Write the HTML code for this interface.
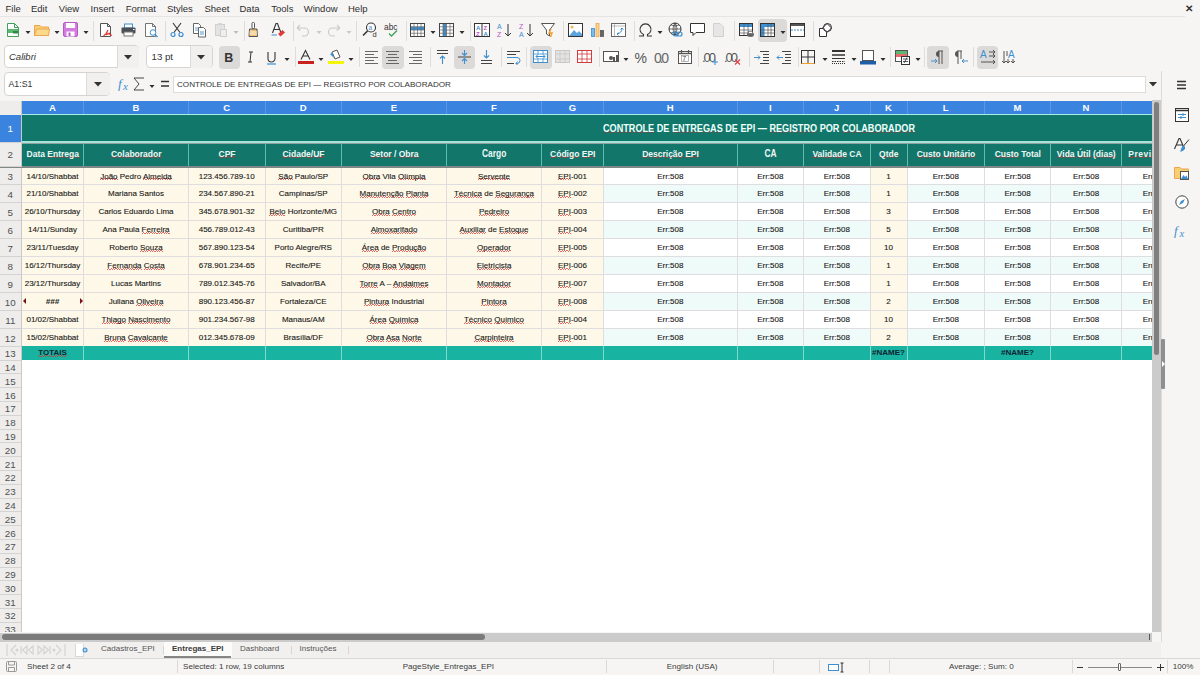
<!DOCTYPE html>
<html><head><meta charset="utf-8"><style>
*{margin:0;padding:0;box-sizing:border-box;}
html,body{width:1200px;height:675px;overflow:hidden;background:#f6f5f4;font-family:"Liberation Sans", sans-serif;}
.ch{position:absolute;top:101px;height:13.5px;line-height:13.5px;text-align:center;color:#fff;font-size:9.5px;font-weight:bold;}
.c{position:absolute;border-right:1px solid #dfdde0;border-bottom:1px solid #dfdde0;text-align:center;font-size:8px;color:#161616;-webkit-text-stroke:0.1px #161616;line-height:18px;white-space:nowrap;overflow:hidden;}
.h{position:absolute;background:#12766a;border-right:1.5px solid #5fbdb0;text-align:center;font-size:8.5px;font-weight:bold;color:#eef8f6;line-height:23px;white-space:nowrap;overflow:hidden;}
.h.big{font-size:10.5px;} .h.big span{display:inline-block;transform:scaleX(0.8);line-height:21px;vertical-align:top;}
.title{position:absolute;text-align:center;font-size:11px;font-weight:bold;color:#ecfffb;line-height:26.5px;white-space:nowrap;}
.t{position:absolute;background:#19b3a1;border-right:1px solid #7fd9cd;text-align:center;font-size:8px;font-weight:bold;color:#123;line-height:13px;white-space:nowrap;overflow:hidden;}
.rh{position:absolute;left:0;width:21.5px;text-align:center;font-size:9.8px;color:#505050;border-bottom:1px solid #d4d3d1;background:#eeedec;border-right:1px solid #c9c8c6;display:flex;align-items:center;justify-content:center;padding-top:1px;}
.rh.sel{background:#3a84e0;color:#fff;}
u{text-decoration:none;background-image:repeating-linear-gradient(90deg,rgba(215,40,40,.85) 0 1.2px,transparent 1.2px 2.4px),repeating-linear-gradient(90deg,transparent 0 1.2px,rgba(215,40,40,.85) 1.2px 2.4px);background-size:100% 0.8px,100% 0.8px;background-position:0 calc(100% - 0.6px),0 calc(100% - 1.4px);background-repeat:no-repeat;}
u.tq{background-image:repeating-linear-gradient(90deg,rgba(170,50,50,.6) 0 1.5px,transparent 1.5px 3px),repeating-linear-gradient(90deg,transparent 0 1.5px,rgba(170,50,50,.6) 1.5px 3px);background-size:100% 1px,100% 1px;background-position:0 calc(100% - 1px),0 calc(100% - 2px);}
.menu{position:absolute;top:3px;font-size:9.5px;color:#2e2e2e;}
.sb{position:absolute;top:662px;font-size:8.1px;color:#3a3a3a;white-space:nowrap;}
.tab{position:absolute;top:644px;font-size:8px;color:#555;white-space:nowrap;}
</style></head>
<body>
<div id="grid" style="position:absolute;left:0;top:0;width:1151.5px;height:632px;overflow:hidden;">
<div style="position:absolute;left:0px;top:101px;width:1152px;height:531px;background:#fff;"></div>
<div style="position:absolute;left:21.5px;top:101px;width:1130.0px;height:13.5px;background:#3a84e0;"></div>
<div class="ch" style="left:21.5px;width:62.0px;">A</div>
<div style="position:absolute;left:83.0px;top:101px;width:1px;height:13.5px;background:#5b97e3;"></div>
<div class="ch" style="left:83.5px;width:105.0px;">B</div>
<div style="position:absolute;left:188.0px;top:101px;width:1px;height:13.5px;background:#5b97e3;"></div>
<div class="ch" style="left:188.5px;width:76.5px;">C</div>
<div style="position:absolute;left:264.5px;top:101px;width:1px;height:13.5px;background:#5b97e3;"></div>
<div class="ch" style="left:265px;width:76.5px;">D</div>
<div style="position:absolute;left:341.0px;top:101px;width:1px;height:13.5px;background:#5b97e3;"></div>
<div class="ch" style="left:341.5px;width:105.0px;">E</div>
<div style="position:absolute;left:446.0px;top:101px;width:1px;height:13.5px;background:#5b97e3;"></div>
<div class="ch" style="left:446.5px;width:95.0px;">F</div>
<div style="position:absolute;left:541.0px;top:101px;width:1px;height:13.5px;background:#5b97e3;"></div>
<div class="ch" style="left:541.5px;width:62.0px;">G</div>
<div style="position:absolute;left:603.0px;top:101px;width:1px;height:13.5px;background:#5b97e3;"></div>
<div class="ch" style="left:603.5px;width:133.5px;">H</div>
<div style="position:absolute;left:736.5px;top:101px;width:1px;height:13.5px;background:#5b97e3;"></div>
<div class="ch" style="left:737px;width:66.5px;">I</div>
<div style="position:absolute;left:803.0px;top:101px;width:1px;height:13.5px;background:#5b97e3;"></div>
<div class="ch" style="left:803.5px;width:66.5px;">J</div>
<div style="position:absolute;left:869.5px;top:101px;width:1px;height:13.5px;background:#5b97e3;"></div>
<div class="ch" style="left:870px;width:37px;">K</div>
<div style="position:absolute;left:906.5px;top:101px;width:1px;height:13.5px;background:#5b97e3;"></div>
<div class="ch" style="left:907px;width:77.5px;">L</div>
<div style="position:absolute;left:984.0px;top:101px;width:1px;height:13.5px;background:#5b97e3;"></div>
<div class="ch" style="left:984.5px;width:66.0px;">M</div>
<div style="position:absolute;left:1050.0px;top:101px;width:1px;height:13.5px;background:#5b97e3;"></div>
<div class="ch" style="left:1050.5px;width:71.0px;">N</div>
<div style="position:absolute;left:1121.0px;top:101px;width:1px;height:13.5px;background:#5b97e3;"></div>
<div class="ch" style="left:1121.5px;width:68.5px;">O</div>
<div style="position:absolute;left:1189.5px;top:101px;width:1px;height:13.5px;background:#5b97e3;"></div>
<div style="position:absolute;left:0px;top:101px;width:21.5px;height:531px;background:#eeedec;"></div>
<div style="position:absolute;left:21px;top:101px;width:1px;height:531px;background:#c9c8c6;"></div>
<div class="c" style="left:22.0px;top:167.5px;width:62.0px;height:17.94999999999999px;background:#fdf8e7;">14/10/Shabbat</div>
<div class="c" style="left:84.0px;top:167.5px;width:105.0px;height:17.94999999999999px;background:#fdf8e7;"><u>João</u> Pedro <u>Almeida</u></div>
<div class="c" style="left:189.0px;top:167.5px;width:76.5px;height:17.94999999999999px;background:#fdf8e7;">123.456.789-10</div>
<div class="c" style="left:265.5px;top:167.5px;width:76.5px;height:17.94999999999999px;background:#fdf8e7;"><u>São</u> Paulo/SP</div>
<div class="c" style="left:342.0px;top:167.5px;width:105.0px;height:17.94999999999999px;background:#fdf8e7;"><u>Obra</u> Vila <u>Olímpia</u></div>
<div class="c" style="left:447.0px;top:167.5px;width:95.0px;height:17.94999999999999px;background:#fdf8e7;"><u>Servente</u></div>
<div class="c" style="left:542.0px;top:167.5px;width:62.0px;height:17.94999999999999px;background:#fdf8e7;"><u>EPI</u>-001</div>
<div class="c" style="left:604.0px;top:167.5px;width:133.5px;height:17.94999999999999px;background:#ffffff;">Err:508</div>
<div class="c" style="left:737.5px;top:167.5px;width:66.5px;height:17.94999999999999px;background:#ffffff;">Err:508</div>
<div class="c" style="left:804.0px;top:167.5px;width:66.5px;height:17.94999999999999px;background:#ffffff;">Err:508</div>
<div class="c" style="left:870.5px;top:167.5px;width:37px;height:17.94999999999999px;background:#fdf8e7;">1</div>
<div class="c" style="left:907.5px;top:167.5px;width:77.5px;height:17.94999999999999px;background:#ffffff;">Err:508</div>
<div class="c" style="left:985.0px;top:167.5px;width:66.0px;height:17.94999999999999px;background:#ffffff;">Err:508</div>
<div class="c" style="left:1051.0px;top:167.5px;width:71.0px;height:17.94999999999999px;background:#ffffff;">Err:508</div>
<div class="c" style="left:1122.0px;top:167.5px;width:68.5px;height:17.94999999999999px;background:#ffffff;">Err:508</div>
<div class="c" style="left:22.0px;top:185.45px;width:62.0px;height:17.950000000000017px;background:#fdf8e7;">21/10/Shabbat</div>
<div class="c" style="left:84.0px;top:185.45px;width:105.0px;height:17.950000000000017px;background:#fdf8e7;">Mariana Santos</div>
<div class="c" style="left:189.0px;top:185.45px;width:76.5px;height:17.950000000000017px;background:#fdf8e7;">234.567.890-21</div>
<div class="c" style="left:265.5px;top:185.45px;width:76.5px;height:17.950000000000017px;background:#fdf8e7;">Campinas/SP</div>
<div class="c" style="left:342.0px;top:185.45px;width:105.0px;height:17.950000000000017px;background:#fdf8e7;"><u>Manutenção</u> <u>Planta</u></div>
<div class="c" style="left:447.0px;top:185.45px;width:95.0px;height:17.950000000000017px;background:#fdf8e7;"><u>Técnica</u> de <u>Segurança</u></div>
<div class="c" style="left:542.0px;top:185.45px;width:62.0px;height:17.950000000000017px;background:#fdf8e7;"><u>EPI</u>-002</div>
<div class="c" style="left:604.0px;top:185.45px;width:133.5px;height:17.950000000000017px;background:#eefbf9;">Err:508</div>
<div class="c" style="left:737.5px;top:185.45px;width:66.5px;height:17.950000000000017px;background:#eefbf9;">Err:508</div>
<div class="c" style="left:804.0px;top:185.45px;width:66.5px;height:17.950000000000017px;background:#eefbf9;">Err:508</div>
<div class="c" style="left:870.5px;top:185.45px;width:37px;height:17.950000000000017px;background:#fdf8e7;">1</div>
<div class="c" style="left:907.5px;top:185.45px;width:77.5px;height:17.950000000000017px;background:#eefbf9;">Err:508</div>
<div class="c" style="left:985.0px;top:185.45px;width:66.0px;height:17.950000000000017px;background:#eefbf9;">Err:508</div>
<div class="c" style="left:1051.0px;top:185.45px;width:71.0px;height:17.950000000000017px;background:#eefbf9;">Err:508</div>
<div class="c" style="left:1122.0px;top:185.45px;width:68.5px;height:17.950000000000017px;background:#eefbf9;">Err:508</div>
<div class="c" style="left:22.0px;top:203.4px;width:62.0px;height:17.94999999999999px;background:#fdf8e7;">26/10/Thursday</div>
<div class="c" style="left:84.0px;top:203.4px;width:105.0px;height:17.94999999999999px;background:#fdf8e7;">Carlos Eduardo Lima</div>
<div class="c" style="left:189.0px;top:203.4px;width:76.5px;height:17.94999999999999px;background:#fdf8e7;">345.678.901-32</div>
<div class="c" style="left:265.5px;top:203.4px;width:76.5px;height:17.94999999999999px;background:#fdf8e7;"><u>Belo</u> Horizonte/MG</div>
<div class="c" style="left:342.0px;top:203.4px;width:105.0px;height:17.94999999999999px;background:#fdf8e7;"><u>Obra</u> <u>Centro</u></div>
<div class="c" style="left:447.0px;top:203.4px;width:95.0px;height:17.94999999999999px;background:#fdf8e7;"><u>Pedreiro</u></div>
<div class="c" style="left:542.0px;top:203.4px;width:62.0px;height:17.94999999999999px;background:#fdf8e7;"><u>EPI</u>-003</div>
<div class="c" style="left:604.0px;top:203.4px;width:133.5px;height:17.94999999999999px;background:#ffffff;">Err:508</div>
<div class="c" style="left:737.5px;top:203.4px;width:66.5px;height:17.94999999999999px;background:#ffffff;">Err:508</div>
<div class="c" style="left:804.0px;top:203.4px;width:66.5px;height:17.94999999999999px;background:#ffffff;">Err:508</div>
<div class="c" style="left:870.5px;top:203.4px;width:37px;height:17.94999999999999px;background:#fdf8e7;">3</div>
<div class="c" style="left:907.5px;top:203.4px;width:77.5px;height:17.94999999999999px;background:#ffffff;">Err:508</div>
<div class="c" style="left:985.0px;top:203.4px;width:66.0px;height:17.94999999999999px;background:#ffffff;">Err:508</div>
<div class="c" style="left:1051.0px;top:203.4px;width:71.0px;height:17.94999999999999px;background:#ffffff;">Err:508</div>
<div class="c" style="left:1122.0px;top:203.4px;width:68.5px;height:17.94999999999999px;background:#ffffff;">Err:508</div>
<div class="c" style="left:22.0px;top:221.35px;width:62.0px;height:17.950000000000017px;background:#fdf8e7;">14/11/Sunday</div>
<div class="c" style="left:84.0px;top:221.35px;width:105.0px;height:17.950000000000017px;background:#fdf8e7;">Ana Paula <u>Ferreira</u></div>
<div class="c" style="left:189.0px;top:221.35px;width:76.5px;height:17.950000000000017px;background:#fdf8e7;">456.789.012-43</div>
<div class="c" style="left:265.5px;top:221.35px;width:76.5px;height:17.950000000000017px;background:#fdf8e7;">Curitiba/PR</div>
<div class="c" style="left:342.0px;top:221.35px;width:105.0px;height:17.950000000000017px;background:#fdf8e7;"><u>Almoxarifado</u></div>
<div class="c" style="left:447.0px;top:221.35px;width:95.0px;height:17.950000000000017px;background:#fdf8e7;"><u>Auxiliar</u> de <u>Estoque</u></div>
<div class="c" style="left:542.0px;top:221.35px;width:62.0px;height:17.950000000000017px;background:#fdf8e7;"><u>EPI</u>-004</div>
<div class="c" style="left:604.0px;top:221.35px;width:133.5px;height:17.950000000000017px;background:#eefbf9;">Err:508</div>
<div class="c" style="left:737.5px;top:221.35px;width:66.5px;height:17.950000000000017px;background:#eefbf9;">Err:508</div>
<div class="c" style="left:804.0px;top:221.35px;width:66.5px;height:17.950000000000017px;background:#eefbf9;">Err:508</div>
<div class="c" style="left:870.5px;top:221.35px;width:37px;height:17.950000000000017px;background:#fdf8e7;">5</div>
<div class="c" style="left:907.5px;top:221.35px;width:77.5px;height:17.950000000000017px;background:#eefbf9;">Err:508</div>
<div class="c" style="left:985.0px;top:221.35px;width:66.0px;height:17.950000000000017px;background:#eefbf9;">Err:508</div>
<div class="c" style="left:1051.0px;top:221.35px;width:71.0px;height:17.950000000000017px;background:#eefbf9;">Err:508</div>
<div class="c" style="left:1122.0px;top:221.35px;width:68.5px;height:17.950000000000017px;background:#eefbf9;">Err:508</div>
<div class="c" style="left:22.0px;top:239.3px;width:62.0px;height:17.94999999999999px;background:#fdf8e7;">23/11/Tuesday</div>
<div class="c" style="left:84.0px;top:239.3px;width:105.0px;height:17.94999999999999px;background:#fdf8e7;">Roberto <u>Souza</u></div>
<div class="c" style="left:189.0px;top:239.3px;width:76.5px;height:17.94999999999999px;background:#fdf8e7;">567.890.123-54</div>
<div class="c" style="left:265.5px;top:239.3px;width:76.5px;height:17.94999999999999px;background:#fdf8e7;">Porto Alegre/RS</div>
<div class="c" style="left:342.0px;top:239.3px;width:105.0px;height:17.94999999999999px;background:#fdf8e7;"><u>Área</u> de <u>Produção</u></div>
<div class="c" style="left:447.0px;top:239.3px;width:95.0px;height:17.94999999999999px;background:#fdf8e7;"><u>Operador</u></div>
<div class="c" style="left:542.0px;top:239.3px;width:62.0px;height:17.94999999999999px;background:#fdf8e7;"><u>EPI</u>-005</div>
<div class="c" style="left:604.0px;top:239.3px;width:133.5px;height:17.94999999999999px;background:#ffffff;">Err:508</div>
<div class="c" style="left:737.5px;top:239.3px;width:66.5px;height:17.94999999999999px;background:#ffffff;">Err:508</div>
<div class="c" style="left:804.0px;top:239.3px;width:66.5px;height:17.94999999999999px;background:#ffffff;">Err:508</div>
<div class="c" style="left:870.5px;top:239.3px;width:37px;height:17.94999999999999px;background:#fdf8e7;">10</div>
<div class="c" style="left:907.5px;top:239.3px;width:77.5px;height:17.94999999999999px;background:#ffffff;">Err:508</div>
<div class="c" style="left:985.0px;top:239.3px;width:66.0px;height:17.94999999999999px;background:#ffffff;">Err:508</div>
<div class="c" style="left:1051.0px;top:239.3px;width:71.0px;height:17.94999999999999px;background:#ffffff;">Err:508</div>
<div class="c" style="left:1122.0px;top:239.3px;width:68.5px;height:17.94999999999999px;background:#ffffff;">Err:508</div>
<div class="c" style="left:22.0px;top:257.25px;width:62.0px;height:17.94999999999999px;background:#fdf8e7;">16/12/Thursday</div>
<div class="c" style="left:84.0px;top:257.25px;width:105.0px;height:17.94999999999999px;background:#fdf8e7;"><u>Fernanda</u> <u>Costa</u></div>
<div class="c" style="left:189.0px;top:257.25px;width:76.5px;height:17.94999999999999px;background:#fdf8e7;">678.901.234-65</div>
<div class="c" style="left:265.5px;top:257.25px;width:76.5px;height:17.94999999999999px;background:#fdf8e7;">Recife/PE</div>
<div class="c" style="left:342.0px;top:257.25px;width:105.0px;height:17.94999999999999px;background:#fdf8e7;"><u>Obra</u> <u>Boa</u> <u>Viagem</u></div>
<div class="c" style="left:447.0px;top:257.25px;width:95.0px;height:17.94999999999999px;background:#fdf8e7;"><u>Eletricista</u></div>
<div class="c" style="left:542.0px;top:257.25px;width:62.0px;height:17.94999999999999px;background:#fdf8e7;"><u>EPI</u>-006</div>
<div class="c" style="left:604.0px;top:257.25px;width:133.5px;height:17.94999999999999px;background:#eefbf9;">Err:508</div>
<div class="c" style="left:737.5px;top:257.25px;width:66.5px;height:17.94999999999999px;background:#eefbf9;">Err:508</div>
<div class="c" style="left:804.0px;top:257.25px;width:66.5px;height:17.94999999999999px;background:#eefbf9;">Err:508</div>
<div class="c" style="left:870.5px;top:257.25px;width:37px;height:17.94999999999999px;background:#fdf8e7;">1</div>
<div class="c" style="left:907.5px;top:257.25px;width:77.5px;height:17.94999999999999px;background:#eefbf9;">Err:508</div>
<div class="c" style="left:985.0px;top:257.25px;width:66.0px;height:17.94999999999999px;background:#eefbf9;">Err:508</div>
<div class="c" style="left:1051.0px;top:257.25px;width:71.0px;height:17.94999999999999px;background:#eefbf9;">Err:508</div>
<div class="c" style="left:1122.0px;top:257.25px;width:68.5px;height:17.94999999999999px;background:#eefbf9;">Err:508</div>
<div class="c" style="left:22.0px;top:275.2px;width:62.0px;height:17.94999999999999px;background:#fdf8e7;">23/12/Thursday</div>
<div class="c" style="left:84.0px;top:275.2px;width:105.0px;height:17.94999999999999px;background:#fdf8e7;">Lucas Martins</div>
<div class="c" style="left:189.0px;top:275.2px;width:76.5px;height:17.94999999999999px;background:#fdf8e7;">789.012.345-76</div>
<div class="c" style="left:265.5px;top:275.2px;width:76.5px;height:17.94999999999999px;background:#fdf8e7;">Salvador/BA</div>
<div class="c" style="left:342.0px;top:275.2px;width:105.0px;height:17.94999999999999px;background:#fdf8e7;"><u>Torre</u> A – <u>Andaimes</u></div>
<div class="c" style="left:447.0px;top:275.2px;width:95.0px;height:17.94999999999999px;background:#fdf8e7;"><u>Montador</u></div>
<div class="c" style="left:542.0px;top:275.2px;width:62.0px;height:17.94999999999999px;background:#fdf8e7;"><u>EPI</u>-007</div>
<div class="c" style="left:604.0px;top:275.2px;width:133.5px;height:17.94999999999999px;background:#ffffff;">Err:508</div>
<div class="c" style="left:737.5px;top:275.2px;width:66.5px;height:17.94999999999999px;background:#ffffff;">Err:508</div>
<div class="c" style="left:804.0px;top:275.2px;width:66.5px;height:17.94999999999999px;background:#ffffff;">Err:508</div>
<div class="c" style="left:870.5px;top:275.2px;width:37px;height:17.94999999999999px;background:#fdf8e7;">1</div>
<div class="c" style="left:907.5px;top:275.2px;width:77.5px;height:17.94999999999999px;background:#ffffff;">Err:508</div>
<div class="c" style="left:985.0px;top:275.2px;width:66.0px;height:17.94999999999999px;background:#ffffff;">Err:508</div>
<div class="c" style="left:1051.0px;top:275.2px;width:71.0px;height:17.94999999999999px;background:#ffffff;">Err:508</div>
<div class="c" style="left:1122.0px;top:275.2px;width:68.5px;height:17.94999999999999px;background:#ffffff;">Err:508</div>
<div class="c" style="left:22.0px;top:293.15px;width:62.0px;height:17.950000000000045px;background:#fdf8e7;"><b style="font-style:italic;color:#333">###</b></div>
<div class="c" style="left:84.0px;top:293.15px;width:105.0px;height:17.950000000000045px;background:#fdf8e7;">Juliana <u>Oliveira</u></div>
<div class="c" style="left:189.0px;top:293.15px;width:76.5px;height:17.950000000000045px;background:#fdf8e7;">890.123.456-87</div>
<div class="c" style="left:265.5px;top:293.15px;width:76.5px;height:17.950000000000045px;background:#fdf8e7;">Fortaleza/CE</div>
<div class="c" style="left:342.0px;top:293.15px;width:105.0px;height:17.950000000000045px;background:#fdf8e7;"><u>Pintura</u> Industrial</div>
<div class="c" style="left:447.0px;top:293.15px;width:95.0px;height:17.950000000000045px;background:#fdf8e7;"><u>Pintora</u></div>
<div class="c" style="left:542.0px;top:293.15px;width:62.0px;height:17.950000000000045px;background:#fdf8e7;"><u>EPI</u>-008</div>
<div class="c" style="left:604.0px;top:293.15px;width:133.5px;height:17.950000000000045px;background:#eefbf9;">Err:508</div>
<div class="c" style="left:737.5px;top:293.15px;width:66.5px;height:17.950000000000045px;background:#eefbf9;">Err:508</div>
<div class="c" style="left:804.0px;top:293.15px;width:66.5px;height:17.950000000000045px;background:#eefbf9;">Err:508</div>
<div class="c" style="left:870.5px;top:293.15px;width:37px;height:17.950000000000045px;background:#fdf8e7;">2</div>
<div class="c" style="left:907.5px;top:293.15px;width:77.5px;height:17.950000000000045px;background:#eefbf9;">Err:508</div>
<div class="c" style="left:985.0px;top:293.15px;width:66.0px;height:17.950000000000045px;background:#eefbf9;">Err:508</div>
<div class="c" style="left:1051.0px;top:293.15px;width:71.0px;height:17.950000000000045px;background:#eefbf9;">Err:508</div>
<div class="c" style="left:1122.0px;top:293.15px;width:68.5px;height:17.950000000000045px;background:#eefbf9;">Err:508</div>
<div class="c" style="left:22.0px;top:311.1px;width:62.0px;height:17.949999999999932px;background:#fdf8e7;">01/02/Shabbat</div>
<div class="c" style="left:84.0px;top:311.1px;width:105.0px;height:17.949999999999932px;background:#fdf8e7;"><u>Thiago</u> <u>Nascimento</u></div>
<div class="c" style="left:189.0px;top:311.1px;width:76.5px;height:17.949999999999932px;background:#fdf8e7;">901.234.567-98</div>
<div class="c" style="left:265.5px;top:311.1px;width:76.5px;height:17.949999999999932px;background:#fdf8e7;">Manaus/AM</div>
<div class="c" style="left:342.0px;top:311.1px;width:105.0px;height:17.949999999999932px;background:#fdf8e7;"><u>Área</u> <u>Química</u></div>
<div class="c" style="left:447.0px;top:311.1px;width:95.0px;height:17.949999999999932px;background:#fdf8e7;"><u>Técnico</u> <u>Químico</u></div>
<div class="c" style="left:542.0px;top:311.1px;width:62.0px;height:17.949999999999932px;background:#fdf8e7;"><u>EPI</u>-004</div>
<div class="c" style="left:604.0px;top:311.1px;width:133.5px;height:17.949999999999932px;background:#ffffff;">Err:508</div>
<div class="c" style="left:737.5px;top:311.1px;width:66.5px;height:17.949999999999932px;background:#ffffff;">Err:508</div>
<div class="c" style="left:804.0px;top:311.1px;width:66.5px;height:17.949999999999932px;background:#ffffff;">Err:508</div>
<div class="c" style="left:870.5px;top:311.1px;width:37px;height:17.949999999999932px;background:#fdf8e7;">10</div>
<div class="c" style="left:907.5px;top:311.1px;width:77.5px;height:17.949999999999932px;background:#ffffff;">Err:508</div>
<div class="c" style="left:985.0px;top:311.1px;width:66.0px;height:17.949999999999932px;background:#ffffff;">Err:508</div>
<div class="c" style="left:1051.0px;top:311.1px;width:71.0px;height:17.949999999999932px;background:#ffffff;">Err:508</div>
<div class="c" style="left:1122.0px;top:311.1px;width:68.5px;height:17.949999999999932px;background:#ffffff;">Err:508</div>
<div class="c" style="left:22.0px;top:329.04999999999995px;width:62.0px;height:17.950000000000045px;background:#fdf8e7;">15/02/Shabbat</div>
<div class="c" style="left:84.0px;top:329.04999999999995px;width:105.0px;height:17.950000000000045px;background:#fdf8e7;"><u>Bruna</u> <u>Cavalcante</u></div>
<div class="c" style="left:189.0px;top:329.04999999999995px;width:76.5px;height:17.950000000000045px;background:#fdf8e7;">012.345.678-09</div>
<div class="c" style="left:265.5px;top:329.04999999999995px;width:76.5px;height:17.950000000000045px;background:#fdf8e7;">Brasília/DF</div>
<div class="c" style="left:342.0px;top:329.04999999999995px;width:105.0px;height:17.950000000000045px;background:#fdf8e7;"><u>Obra</u> <u>Asa</u> <u>Norte</u></div>
<div class="c" style="left:447.0px;top:329.04999999999995px;width:95.0px;height:17.950000000000045px;background:#fdf8e7;"><u>Carpinteira</u></div>
<div class="c" style="left:542.0px;top:329.04999999999995px;width:62.0px;height:17.950000000000045px;background:#fdf8e7;"><u>EPI</u>-001</div>
<div class="c" style="left:604.0px;top:329.04999999999995px;width:133.5px;height:17.950000000000045px;background:#eefbf9;">Err:508</div>
<div class="c" style="left:737.5px;top:329.04999999999995px;width:66.5px;height:17.950000000000045px;background:#eefbf9;">Err:508</div>
<div class="c" style="left:804.0px;top:329.04999999999995px;width:66.5px;height:17.950000000000045px;background:#eefbf9;">Err:508</div>
<div class="c" style="left:870.5px;top:329.04999999999995px;width:37px;height:17.950000000000045px;background:#fdf8e7;">2</div>
<div class="c" style="left:907.5px;top:329.04999999999995px;width:77.5px;height:17.950000000000045px;background:#eefbf9;">Err:508</div>
<div class="c" style="left:985.0px;top:329.04999999999995px;width:66.0px;height:17.950000000000045px;background:#eefbf9;">Err:508</div>
<div class="c" style="left:1051.0px;top:329.04999999999995px;width:71.0px;height:17.950000000000045px;background:#eefbf9;">Err:508</div>
<div class="c" style="left:1122.0px;top:329.04999999999995px;width:68.5px;height:17.950000000000045px;background:#eefbf9;">Err:508</div>
<div style="position:absolute;left:21.5px;top:142.5px;width:1130.0px;height:24.0px;background:#12766a;"></div>
<div class="h" style="left:22.25px;top:142.5px;width:62.0px;height:24.0px;">Data <u>Entrega</u></div>
<div class="h" style="left:84.25px;top:142.5px;width:105.0px;height:24.0px;"><u>Colaborador</u></div>
<div class="h" style="left:189.25px;top:142.5px;width:76.5px;height:24.0px;"><u>CPF</u></div>
<div class="h" style="left:265.75px;top:142.5px;width:76.5px;height:24.0px;"><u>Cidade/UF</u></div>
<div class="h" style="left:342.25px;top:142.5px;width:105.0px;height:24.0px;"><u>Setor</u> / <u>Obra</u></div>
<div class="h big" style="left:447.25px;top:142.5px;width:95.0px;height:24.0px;"><span>Cargo</span></div>
<div class="h" style="left:542.25px;top:142.5px;width:62.0px;height:24.0px;"><u>Código</u> <u>EPI</u></div>
<div class="h" style="left:604.25px;top:142.5px;width:133.5px;height:24.0px;"><u>Descrição</u> <u>EPI</u></div>
<div class="h big" style="left:737.75px;top:142.5px;width:66.5px;height:24.0px;"><span>CA</span></div>
<div class="h" style="left:804.25px;top:142.5px;width:66.5px;height:24.0px;"><u>Validade</u> CA</div>
<div class="h" style="left:870.75px;top:142.5px;width:37px;height:24.0px;"><u>Qtde</u></div>
<div class="h" style="left:907.75px;top:142.5px;width:77.5px;height:24.0px;"><u>Custo</u> <u>Unitário</u></div>
<div class="h" style="left:985.25px;top:142.5px;width:66.0px;height:24.0px;"><u>Custo</u> Total</div>
<div class="h" style="left:1051.25px;top:142.5px;width:71.0px;height:24.0px;"><u>Vida</u> <u>Útil</u> <u>(dias)</u></div>
<div class="h" style="left:1122.25px;top:142.5px;width:68.5px;height:24.0px;"><span style="position:absolute;left:6px;letter-spacing:0.5px"><u>Previsão</u></span></div>
<div style="position:absolute;left:21.5px;top:114.5px;width:1130.0px;height:28.0px;background:#12776b;"></div>
<div class="title" style="left:400px;top:114.5px;width:718px;height:28.0px;transform:scaleX(0.83);transform-origin:359px 0;"><u class=tq>CONTROLE</u> DE <u class=tq>ENTREGAS</u> DE EPI — <u class=tq>REGISTRO</u> POR <u class=tq>COLABORADOR</u></div>
<div style="position:absolute;left:21.5px;top:114px;width:1130.0px;height:1.2px;background:#a9ece6;"></div>
<div style="position:absolute;left:21.5px;top:141px;width:1130.0px;height:1.8px;background:#a6e4da;"></div>
<div style="position:absolute;left:0px;top:142.8px;width:1151.5px;height:0.8px;background:#8da19d;"></div>
<div class="t" style="left:22.0px;top:346px;width:62.0px;height:13.600000000000023px;"><u>TOTAIS</u></div>
<div class="t" style="left:84.0px;top:346px;width:105.0px;height:13.600000000000023px;"></div>
<div class="t" style="left:189.0px;top:346px;width:76.5px;height:13.600000000000023px;"></div>
<div class="t" style="left:265.5px;top:346px;width:76.5px;height:13.600000000000023px;"></div>
<div class="t" style="left:342.0px;top:346px;width:105.0px;height:13.600000000000023px;"></div>
<div class="t" style="left:447.0px;top:346px;width:95.0px;height:13.600000000000023px;"></div>
<div class="t" style="left:542.0px;top:346px;width:62.0px;height:13.600000000000023px;"></div>
<div class="t" style="left:604.0px;top:346px;width:133.5px;height:13.600000000000023px;"></div>
<div class="t" style="left:737.5px;top:346px;width:66.5px;height:13.600000000000023px;"></div>
<div class="t" style="left:804.0px;top:346px;width:66.5px;height:13.600000000000023px;"></div>
<div class="t" style="left:870.5px;top:346px;width:37px;height:13.600000000000023px;">#NAME?</div>
<div class="t" style="left:907.5px;top:346px;width:77.5px;height:13.600000000000023px;"></div>
<div class="t" style="left:985.0px;top:346px;width:66.0px;height:13.600000000000023px;">#NAME?</div>
<div class="t" style="left:1051.0px;top:346px;width:71.0px;height:13.600000000000023px;"></div>
<div class="t" style="left:1122.0px;top:346px;width:68.5px;height:13.600000000000023px;"></div>
<div style="position:absolute;left:0px;top:165.8px;width:1151.5px;height:1.8px;background:#7f8886;"></div>
<div class="rh sel" style="top:114.5px;height:28.0px;">1</div>
<div class="rh" style="top:142.5px;height:24.0px;">2</div>
<div class="rh" style="top:167.5px;height:17.94999999999999px;">3</div>
<div class="rh" style="top:185.45px;height:17.950000000000017px;">4</div>
<div class="rh" style="top:203.4px;height:17.94999999999999px;">5</div>
<div class="rh" style="top:221.35px;height:17.950000000000017px;">6</div>
<div class="rh" style="top:239.3px;height:17.94999999999999px;">7</div>
<div class="rh" style="top:257.25px;height:17.94999999999999px;">8</div>
<div class="rh" style="top:275.2px;height:17.94999999999999px;">9</div>
<div class="rh" style="top:293.15px;height:17.950000000000045px;">10</div>
<div class="rh" style="top:311.1px;height:17.949999999999932px;">11</div>
<div class="rh" style="top:329.04999999999995px;height:17.950000000000045px;">12</div>
<div class="rh" style="top:347px;height:13.600000000000023px;">13</div>
<div class="rh" style="top:360.6px;height:13.800000000000011px;">14</div>
<div class="rh" style="top:374.40000000000003px;height:13.800000000000011px;">15</div>
<div class="rh" style="top:388.20000000000005px;height:13.799999999999955px;">16</div>
<div class="rh" style="top:402.0px;height:13.800000000000011px;">17</div>
<div class="rh" style="top:415.8px;height:13.800000000000011px;">18</div>
<div class="rh" style="top:429.6px;height:13.800000000000011px;">19</div>
<div class="rh" style="top:443.40000000000003px;height:13.800000000000011px;">20</div>
<div class="rh" style="top:457.20000000000005px;height:13.799999999999955px;">21</div>
<div class="rh" style="top:471.0px;height:13.800000000000011px;">22</div>
<div class="rh" style="top:484.8px;height:13.800000000000011px;">23</div>
<div class="rh" style="top:498.6px;height:13.800000000000011px;">24</div>
<div class="rh" style="top:512.4000000000001px;height:13.800000000000011px;">25</div>
<div class="rh" style="top:526.2px;height:13.799999999999955px;">26</div>
<div class="rh" style="top:540.0px;height:13.800000000000068px;">27</div>
<div class="rh" style="top:553.8000000000001px;height:13.799999999999955px;">28</div>
<div class="rh" style="top:567.6px;height:13.800000000000068px;">29</div>
<div class="rh" style="top:581.4000000000001px;height:13.799999999999955px;">30</div>
<div class="rh" style="top:595.2px;height:13.799999999999955px;">31</div>
<div class="rh" style="top:609.0px;height:13.799999999999955px;">32</div>
<div class="rh" style="top:622.8px;height:13.800000000000068px;">33</div>
<div style="position:absolute;left:22.5px;top:298.125px;width:0;height:0;border-top:3px solid transparent;border-bottom:3px solid transparent;border-right:3px solid #7a1010;"></div>
<div style="position:absolute;left:80px;top:298.125px;width:0;height:0;border-top:3px solid transparent;border-bottom:3px solid transparent;border-left:3px solid #7a1010;"></div>
</div>
<div class="menu" style="left:5.5px;">File</div>
<div class="menu" style="left:31px;">Edit</div>
<div class="menu" style="left:58.75px;">View</div>
<div class="menu" style="left:90.5px;">Insert</div>
<div class="menu" style="left:125.75px;">Format</div>
<div class="menu" style="left:167px;">Styles</div>
<div class="menu" style="left:204.5px;">Sheet</div>
<div class="menu" style="left:239.5px;">Data</div>
<div class="menu" style="left:271.25px;">Tools</div>
<div class="menu" style="left:303.75px;">Window</div>
<div class="menu" style="left:348px;">Help</div>
<div style="position:absolute;left:1185px;top:3px;font-size:10px;font-weight:bold;color:#333;">✕</div>
<div style="position:absolute;left:0px;top:16px;width:1185px;height:1px;background:#e6e5e3;"></div>
<div style="position:absolute;left:3.7px;top:45.3px;width:135.3px;height:23px;background:#fff;border:1px solid #d5d4d2;border-radius:4px;"></div>
<div style="position:absolute;left:116.7px;top:45.8px;width:22px;height:22px;background:#f1f0ef;border-left:1px solid #dcdbd9;border-radius:0 4px 4px 0;"></div>
<div style="position:absolute;left:9px;top:51px;font-size:9.5px;font-style:italic;color:#333;">Calibri</div>
<div style="position:absolute;left:146px;top:45.3px;width:66.5px;height:23px;background:#fff;border:1px solid #d5d4d2;border-radius:4px;"></div>
<div style="position:absolute;left:189.5px;top:45.8px;width:22.5px;height:22px;background:#f1f0ef;border-left:1px solid #dcdbd9;border-radius:0 4px 4px 0;"></div>
<div style="position:absolute;left:151.5px;top:51px;font-size:9.7px;color:#333;">13 pt</div>
<div style="position:absolute;left:3.5px;top:72px;width:106.5px;height:23.5px;background:#fff;border:1px solid #d5d4d2;border-radius:4px;"></div>
<div style="position:absolute;left:86px;top:72.5px;width:23.5px;height:22.5px;background:#f1f0ef;border-left:1px solid #dcdbd9;border-radius:0 4px 4px 0;"></div>
<div style="position:absolute;left:8.5px;top:79px;font-size:8.8px;color:#333;">A1:S1</div>
<div style="position:absolute;left:173px;top:76px;width:972.6px;height:16.5px;background:#fff;border:1px solid #dddcda;"></div>
<div style="position:absolute;left:177px;top:79.5px;font-size:8.1px;color:#333;white-space:nowrap;">CONTROLE DE ENTREGAS DE EPI — REGISTRO POR COLABORADOR</div>
<div style="position:absolute;left:1151.5px;top:100px;width:9.5px;height:532px;background:#cbcbcb;"></div>
<div style="position:absolute;left:1153.6px;top:102px;width:5.3px;height:253px;background:#7f7f7f;border-radius:3px;"></div>
<div style="position:absolute;left:0px;top:632.5px;width:1151.5px;height:9px;background:#cbcbcb;"></div>
<div style="position:absolute;left:2px;top:634.4px;width:483px;height:5.6px;background:#7b7b7b;border-radius:3px;"></div>
<div style="position:absolute;left:1160.5px;top:71px;width:1px;height:571px;background:#dcdbd9;"></div>
<div style="position:absolute;left:1161px;top:339px;width:4.3px;height:50px;background:#8f8f8f;border-radius:1px;"></div>
<div style="position:absolute;left:0px;top:641.5px;width:1161px;height:16.5px;background:#f1f0ef;"></div>
<div style="position:absolute;left:0px;top:658px;width:1200px;height:0.8px;background:#dad9d7;"></div>
<div style="position:absolute;left:163.5px;top:642px;width:68px;height:15px;background:#fbfbfa;"></div>
<div class="tab" style="left:101px;">Cadastros_EPI</div>
<div class="tab" style="left:172px;font-weight:bold;color:#3c3c3c;">Entregas_EPI</div>
<div class="tab" style="left:240px;">Dashboard</div>
<div class="tab" style="left:299.5px;">Instruções</div>
<div style="position:absolute;left:164px;top:655.8px;width:67px;height:1.8px;background:#858585;"></div>
<div style="position:absolute;left:163px;top:646px;width:0.8px;height:8px;background:#d6d5d3;"></div>
<div style="position:absolute;left:291px;top:646px;width:0.8px;height:8px;background:#d6d5d3;"></div>
<div style="position:absolute;left:348px;top:646px;width:0.8px;height:8px;background:#d6d5d3;"></div>
<div class="sb" style="left:27px;">Sheet 2 of 4</div>
<div class="sb" style="left:183px;">Selected: 1 row, 19 columns</div>
<div class="sb" style="left:402.7px;">PageStyle_Entregas_EPI</div>
<div class="sb" style="left:666.7px;">English (USA)</div>
<div class="sb" style="left:949px;">Average: ; Sum: 0</div>
<div class="sb" style="left:1172.7px;">100%</div>
<div style="position:absolute;left:176.75px;top:660px;width:0.8px;height:13px;background:#dad9d7;"></div>
<div style="position:absolute;left:606px;top:660px;width:0.8px;height:13px;background:#dad9d7;"></div>
<div style="position:absolute;left:773px;top:660px;width:0.8px;height:13px;background:#dad9d7;"></div>
<div style="position:absolute;left:819px;top:660px;width:0.8px;height:13px;background:#dad9d7;"></div>
<div style="position:absolute;left:869px;top:660px;width:0.8px;height:13px;background:#dad9d7;"></div>
<div style="position:absolute;left:889px;top:660px;width:0.8px;height:13px;background:#dad9d7;"></div>
<div style="position:absolute;left:1071.7px;top:660px;width:0.8px;height:13px;background:#dad9d7;"></div>
<div style="position:absolute;left:1166.7px;top:660px;width:0.8px;height:13px;background:#dad9d7;"></div>
<div style="position:absolute;left:758px;top:19px;width:29px;height:23px;background:#dcdad8;border-radius:4px"></div>
<div style="position:absolute;left:219px;top:45.5px;width:20.5px;height:23.0px;background:#dcdad8;border-radius:4px"></div>
<div style="position:absolute;left:382px;top:45.5px;width:22px;height:23.0px;background:#dcdad8;border-radius:4px"></div>
<div style="position:absolute;left:454px;top:45.5px;width:21px;height:23.0px;background:#dcdad8;border-radius:4px"></div>
<div style="position:absolute;left:530px;top:45.5px;width:22px;height:23.0px;background:#dcdad8;border-radius:4px"></div>
<div style="position:absolute;left:927px;top:45.5px;width:22px;height:23.0px;background:#dcdad8;border-radius:4px"></div>
<div style="position:absolute;left:977px;top:45.5px;width:21px;height:23.0px;background:#dcdad8;border-radius:4px"></div>
<svg style="position:absolute;left:4.5px;top:22.0px;overflow:visible" width="16" height="16" viewBox="0 0 16 16"><path d="M2.5 1.5 H9.5 L13.5 5.5 V14.5 H2.5 Z" fill="#fff" stroke="#3fa35a" stroke-width="1"/><path d="M9.5 1.5 V5.5 H13.5" fill="none" stroke="#3fa35a"/><rect x="3" y="7" width="10" height="4" fill="#5cb870"/><rect x="8" y="9" width="5" height="2.5" fill="#2f8a48"/></svg>
<svg style="position:absolute;left:24.7px;top:28.5px;overflow:visible" width="6" height="6" viewBox="0 0 6 6"><path d="M0.5 2 L5.5 2 L3 5 Z" fill="#2e2e2e"/></svg>
<svg style="position:absolute;left:34.0px;top:22.0px;overflow:visible" width="16" height="16" viewBox="0 0 16 16"><path d="M0.5 3.5 H6 L7.5 5 H14.5 V13.5 H0.5 Z" fill="#f7cf73" stroke="#eea552"/><path d="M0.5 13.5 L2.5 7 H15.5 L14.5 13.5 Z" fill="#fbd98a" stroke="#eea552"/></svg>
<svg style="position:absolute;left:53.8px;top:28.5px;overflow:visible" width="6" height="6" viewBox="0 0 6 6"><path d="M0.5 2 L5.5 2 L3 5 Z" fill="#2e2e2e"/></svg>
<svg style="position:absolute;left:63.0px;top:22.0px;overflow:visible" width="16" height="16" viewBox="0 0 16 16"><rect x="0.5" y="0.5" width="14" height="14" rx="1.5" fill="#d47be0" stroke="#b55ac4"/><rect x="3" y="1" width="9" height="5" fill="#fff"/><rect x="3.5" y="9.5" width="8" height="5" fill="#fff"/><rect x="5.5" y="10.5" width="2" height="3.5" fill="#b55ac4"/></svg>
<svg style="position:absolute;left:83.0px;top:28.5px;overflow:visible" width="6" height="6" viewBox="0 0 6 6"><path d="M0.5 2 L5.5 2 L3 5 Z" fill="#2e2e2e"/></svg>
<div style="position:absolute;left:93.3px;top:20.5px;width:1px;height:20.5px;background:#dedddb"></div>
<svg style="position:absolute;left:99.0px;top:22.0px;overflow:visible" width="16" height="16" viewBox="0 0 16 16"><path d="M1.5 1.5 H8.5 L11.5 4.5 V14.5 H1.5 Z" fill="#fff" stroke="#555"/><path d="M8.5 1.5 V4.5 H11.5" fill="none" stroke="#555"/><path d="M9 8 C8 11 6 13 4.5 14 M8.5 11 L13 13.5 M7 13 L11 11" stroke="#e33b3b" stroke-width="1.2" fill="none"/></svg>
<svg style="position:absolute;left:121.0px;top:22.0px;overflow:visible" width="16" height="16" viewBox="0 0 16 16"><rect x="3.5" y="2" width="8" height="4" fill="#fff" stroke="#3d8fd0"/><rect x="0.5" y="5.5" width="14" height="6" rx="1" fill="#4a4f55"/><rect x="3" y="10" width="9" height="4" fill="#fff" stroke="#777"/><rect x="12" y="7" width="1.5" height="1" fill="#fff"/></svg>
<svg style="position:absolute;left:143.5px;top:22.0px;overflow:visible" width="16" height="16" viewBox="0 0 16 16"><path d="M1.5 1.5 H8.5 L11.5 4.5 V14.5 H1.5 Z" fill="#fff" stroke="#666" stroke-width="0.9"/><path d="M8.5 1.5 V4.5 H11.5" fill="none" stroke="#666" stroke-width="0.9"/><circle cx="9" cy="10.5" r="2.8" fill="#fff" stroke="#3d8fd0" stroke-width="1"/><path d="M11 12.5 L13.5 15" stroke="#3d8fd0" stroke-width="1.2"/></svg>
<div style="position:absolute;left:165px;top:20.5px;width:1px;height:20.5px;background:#dedddb"></div>
<svg style="position:absolute;left:170.0px;top:22.0px;overflow:visible" width="16" height="16" viewBox="0 0 16 16"><path d="M3 1 L10 10.5 M11 1 L4 10.5" stroke="#333" stroke-width="1.1" fill="none"/><circle cx="3" cy="12.5" r="2" fill="none" stroke="#3d8fd0" stroke-width="1.2"/><circle cx="11" cy="12.5" r="2" fill="none" stroke="#3d8fd0" stroke-width="1.2"/></svg>
<svg style="position:absolute;left:192.0px;top:22.0px;overflow:visible" width="16" height="16" viewBox="0 0 16 16"><path d="M1.5 1.5 H6.5 L8.5 3.5 V11.5 H1.5 Z" fill="#fff" stroke="#555" stroke-width="0.9"/><path d="M3 6 H6 M3 8 H6" stroke="#3d8fd0" stroke-width="0.8"/><path d="M6.5 5.5 H11.5 L13.5 7.5 V15 H6.5 Z" fill="#fff" stroke="#555" stroke-width="0.9"/><path d="M8 10 H12 M8 12 H12" stroke="#3d8fd0" stroke-width="0.9"/></svg>
<svg style="position:absolute;left:213.5px;top:22.0px;overflow:visible" width="16" height="16" viewBox="0 0 16 16"><rect x="1.5" y="2.5" width="9" height="11" fill="#e3e3e3" stroke="#cfcfcf"/><rect x="4" y="1" width="4" height="2.5" fill="#d5d5d5"/><rect x="6.5" y="7.5" width="6" height="7" fill="#eee" stroke="#cfcfcf"/></svg>
<svg style="position:absolute;left:232.5px;top:28.5px;overflow:visible" width="6" height="6" viewBox="0 0 6 6"><path d="M0.5 2 L5.5 2 L3 5 Z" fill="#bdbdbd"/></svg>
<div style="position:absolute;left:244px;top:20.5px;width:1px;height:20.5px;background:#dedddb"></div>
<svg style="position:absolute;left:248.0px;top:22.0px;overflow:visible" width="16" height="16" viewBox="0 0 16 16"><rect x="4" y="0.5" width="2.5" height="6" rx="1" fill="#fff" stroke="#555"/><path d="M1.5 7 H9 L9.5 14.5 H1 Z" fill="#f6c277" stroke="#555"/><path d="M1.3 10 H9.2 M1.2 12 H9.3" stroke="#fff" stroke-width="0.8"/></svg>
<svg style="position:absolute;left:271.0px;top:22.0px;overflow:visible" width="16" height="16" viewBox="0 0 16 16"><path d="M1.5 11 L5 1.5 H6.5 L10 11 M3 7.5 H8.5" stroke="#333" stroke-width="1.1" fill="none"/><path d="M0.5 13 H6" stroke="#3d8fd0" stroke-width="1"/><path d="M7 12 L11.5 8 L14 10.5 L9.5 14.5 Z" fill="#e03a3a"/></svg>
<div style="position:absolute;left:292.5px;top:20.5px;width:1px;height:20.5px;background:#dedddb"></div>
<svg style="position:absolute;left:296.0px;top:22.0px;overflow:visible" width="16" height="16" viewBox="0 0 16 16"><path d="M1 6 L4 3 M1 6 L4.5 8.5 M1.5 6 H8.5 A4 4 0 0 1 8.5 14 H6" stroke="#c9c9c9" stroke-width="1.1" fill="none"/></svg>
<svg style="position:absolute;left:316.0px;top:29.0px;overflow:visible" width="6" height="6" viewBox="0 0 6 6"><path d="M0.5 2 L5.5 2 L3 5 Z" fill="#c9c9c9"/></svg>
<svg style="position:absolute;left:326.0px;top:22.0px;overflow:visible" width="16" height="16" viewBox="0 0 16 16"><path d="M14 6 L11 3 M14 6 L10.5 8.5 M13.5 6 H6.5 A4 4 0 0 0 6.5 14 H9" stroke="#c9c9c9" stroke-width="1.1" fill="none"/></svg>
<svg style="position:absolute;left:346.0px;top:29.0px;overflow:visible" width="6" height="6" viewBox="0 0 6 6"><path d="M0.5 2 L5.5 2 L3 5 Z" fill="#c9c9c9"/></svg>
<div style="position:absolute;left:356px;top:20.5px;width:1px;height:20.5px;background:#dedddb"></div>
<svg style="position:absolute;left:362.0px;top:22.0px;overflow:visible" width="16" height="16" viewBox="0 0 16 16"><circle cx="9" cy="5.5" r="4.5" fill="#fff" stroke="#333" stroke-width="1.1"/><path d="M5.5 9 L1 13.5" stroke="#333" stroke-width="1.6"/><text x="6.6" y="8" font-size="6.5" fill="#3d8fd0" font-family="Liberation Sans">a</text><text x="10.5" y="15" font-size="7.5" fill="#333" font-family="Liberation Sans">d</text></svg>
<svg style="position:absolute;left:383.5px;top:22.0px;overflow:visible" width="16" height="16" viewBox="0 0 16 16"><text x="0" y="8" font-size="8.4" fill="#333" font-family="Liberation Sans">abc</text><path d="M5 11.5 L7.5 14 L13 8.5" stroke="#3fa35a" stroke-width="1.4" fill="none"/></svg>
<div style="position:absolute;left:406px;top:20.5px;width:1px;height:20.5px;background:#dedddb"></div>
<svg style="position:absolute;left:409.5px;top:22.0px;overflow:visible" width="16" height="16" viewBox="0 0 16 16"><rect x="0.5" y="1.5" width="14" height="13" fill="#fff" stroke="#444"/><rect x="1" y="4.75" width="13" height="3.25" fill="#3d8fd0"/><path d="M1 4.75 H14" stroke="#666" stroke-width="0.7"/><path d="M1 8 H14" stroke="#666" stroke-width="0.7"/><path d="M1 11.25 H14" stroke="#666" stroke-width="0.7"/><path d="M4 2 V14" stroke="#666" stroke-width="0.7"/><path d="M7.5 2 V14" stroke="#666" stroke-width="0.7"/><path d="M11 2 V14" stroke="#666" stroke-width="0.7"/></svg>
<svg style="position:absolute;left:429.5px;top:28.5px;overflow:visible" width="6" height="6" viewBox="0 0 6 6"><path d="M0.5 2 L5.5 2 L3 5 Z" fill="#2e2e2e"/></svg>
<svg style="position:absolute;left:439.0px;top:22.0px;overflow:visible" width="16" height="16" viewBox="0 0 16 16"><rect x="0.5" y="1.5" width="14" height="13" fill="#fff" stroke="#444"/><rect x="4" y="2" width="3.5" height="12" fill="#3d8fd0"/><path d="M1 4.75 H14" stroke="#666" stroke-width="0.7"/><path d="M1 8 H14" stroke="#666" stroke-width="0.7"/><path d="M1 11.25 H14" stroke="#666" stroke-width="0.7"/><path d="M4 2 V14" stroke="#666" stroke-width="0.7"/><path d="M7.5 2 V14" stroke="#666" stroke-width="0.7"/><path d="M11 2 V14" stroke="#666" stroke-width="0.7"/></svg>
<svg style="position:absolute;left:459.0px;top:28.5px;overflow:visible" width="6" height="6" viewBox="0 0 6 6"><path d="M0.5 2 L5.5 2 L3 5 Z" fill="#2e2e2e"/></svg>
<div style="position:absolute;left:470px;top:20.5px;width:1px;height:20.5px;background:#dedddb"></div>
<svg style="position:absolute;left:474.0px;top:22.0px;overflow:visible" width="16" height="16" viewBox="0 0 16 16"><rect x="0.5" y="1.5" width="15" height="13" fill="#fff" stroke="#333"/><path d="M8 1.5 V14.5" stroke="#333"/><text x="2" y="8" font-size="6" fill="#3d8fd0" font-family="Liberation Sans" font-weight="bold">A</text><text x="2" y="14" font-size="6" fill="#c050c8" font-family="Liberation Sans" font-weight="bold">Z</text><text x="9.5" y="8" font-size="6" fill="#c050c8" font-family="Liberation Sans" font-weight="bold">Z</text><text x="9.5" y="14" font-size="6" fill="#3d8fd0" font-family="Liberation Sans" font-weight="bold">A</text></svg>
<svg style="position:absolute;left:497.0px;top:22.0px;overflow:visible" width="16" height="16" viewBox="0 0 16 16"><text x="0" y="7" font-size="7" fill="#3d8fd0" font-family="Liberation Sans">A</text><text x="0" y="15" font-size="7" fill="#c050c8" font-family="Liberation Sans">Z</text><path d="M11 2 V14 M8 11 L11 14 L14 11" stroke="#333" stroke-width="1" fill="none"/></svg>
<svg style="position:absolute;left:519.0px;top:22.0px;overflow:visible" width="16" height="16" viewBox="0 0 16 16"><text x="0" y="7" font-size="7" fill="#c050c8" font-family="Liberation Sans">Z</text><text x="0" y="15" font-size="7" fill="#3d8fd0" font-family="Liberation Sans">A</text><path d="M11 2 V14 M8 11 L11 14 L14 11" stroke="#333" stroke-width="1" fill="none"/></svg>
<svg style="position:absolute;left:541.0px;top:22.0px;overflow:visible" width="16" height="16" viewBox="0 0 16 16"><path d="M0.5 1.5 H13.5 L8.5 8 V14 L5.5 12 V8 Z" fill="#fff" stroke="#555"/><path d="M10 7 L8 11 H11 L9.5 15" stroke="#f0a030" stroke-width="1.5" fill="none"/></svg>
<div style="position:absolute;left:562.5px;top:20.5px;width:1px;height:20.5px;background:#dedddb"></div>
<svg style="position:absolute;left:568.0px;top:22.0px;overflow:visible" width="16" height="16" viewBox="0 0 16 16"><rect x="0.5" y="1.5" width="14" height="13" fill="#fff" stroke="#333"/><path d="M1 14 L6 8 L9 11 L11 9 L14 12 V14 Z" fill="#5aa5e0"/><circle cx="4" cy="5" r="1.5" fill="#f5b55a"/></svg>
<svg style="position:absolute;left:589.5px;top:22.0px;overflow:visible" width="16" height="16" viewBox="0 0 16 16"><rect x="1.5" y="6.5" width="3" height="8" fill="#7fbbea" stroke="#3d8fd0" stroke-width="0.8"/><rect x="6" y="1.5" width="3" height="13" fill="#f9d48a" stroke="#eea552" stroke-width="0.8"/><rect x="10.5" y="8.5" width="3" height="6" fill="#666" stroke="#555" stroke-width="0.8"/></svg>
<svg style="position:absolute;left:611.0px;top:22.0px;overflow:visible" width="16" height="16" viewBox="0 0 16 16"><rect x="0.5" y="1.5" width="14" height="13" fill="#fff" stroke="#666"/><path d="M1 4 H14 M3.5 2 V14" stroke="#aaa" stroke-width="0.8"/><path d="M6 12 Q11 11 11 6 M9.5 7.5 L11 6 L12.5 7.5 M7.5 10.5 L6 12 L7.5 13.5" stroke="#3d8fd0" stroke-width="1" fill="none"/></svg>
<div style="position:absolute;left:634px;top:20.5px;width:1px;height:20.5px;background:#dedddb"></div>
<svg style="position:absolute;left:638.0px;top:22.0px;overflow:visible" width="16" height="16" viewBox="0 0 16 16"><path d="M1 14 H5.5 V12.5 A5.5 5.5 0 1 1 9.5 12.5 V14 H14" fill="none" stroke="#333" stroke-width="1.1"/></svg>
<svg style="position:absolute;left:657.0px;top:28.5px;overflow:visible" width="6" height="6" viewBox="0 0 6 6"><path d="M0.5 2 L5.5 2 L3 5 Z" fill="#2e2e2e"/></svg>
<svg style="position:absolute;left:668.0px;top:22.0px;overflow:visible" width="16" height="16" viewBox="0 0 16 16"><circle cx="7" cy="7" r="6" fill="#fff" stroke="#333"/><path d="M1 7 H13 M7 1 V13 M3 3 Q7 5 11 3 M3 11 Q7 9 11 11 M7 1 Q3 7 7 13 M7 1 Q11 7 7 13" stroke="#333" stroke-width="0.7" fill="none"/><rect x="5" y="10" width="5" height="4" rx="2" fill="none" stroke="#3d8fd0" stroke-width="1.2"/><rect x="9" y="10" width="5" height="4" rx="2" fill="none" stroke="#3d8fd0" stroke-width="1.2"/></svg>
<svg style="position:absolute;left:690.0px;top:22.0px;overflow:visible" width="16" height="16" viewBox="0 0 16 16"><path d="M0.5 1.5 H14.5 V10.5 H6 L3 13.5 V10.5 H0.5 Z" fill="#fff" stroke="#333"/></svg>
<svg style="position:absolute;left:711.5px;top:22.0px;overflow:visible" width="16" height="16" viewBox="0 0 16 16"><path d="M1.5 1.5 H8 L11.5 5 V14.5 H1.5 Z" fill="#e6e6e6" stroke="#d0d0d0"/></svg>
<div style="position:absolute;left:733.5px;top:20.5px;width:1px;height:20.5px;background:#dedddb"></div>
<svg style="position:absolute;left:739.0px;top:22.0px;overflow:visible" width="16" height="16" viewBox="0 0 16 16"><rect x="0.5" y="1.5" width="13" height="12" fill="#fff" stroke="#333"/><rect x="1" y="2" width="12" height="3" fill="#3d8fd0"/><path d="M1 8 H13 M1 11 H13 M5 2 V13 M9 2 V13" stroke="#555" stroke-width="0.7"/><ellipse cx="11.5" cy="12.5" rx="3.5" ry="2.5" fill="#666"/><rect x="9.5" y="9.5" width="4" height="2" fill="#fff" stroke="#555" stroke-width="0.6"/></svg>
<svg style="position:absolute;left:760.0px;top:22.0px;overflow:visible" width="16" height="16" viewBox="0 0 16 16"><rect x="0.5" y="1.5" width="14" height="13" fill="#fff" stroke="#333"/><rect x="1" y="2" width="13" height="3" fill="#3d8fd0"/><rect x="1" y="2" width="3.5" height="12" fill="#3d8fd0"/><path d="M1 8 H14 M1 11 H14 M8 2 V14 M11 2 V14" stroke="#555" stroke-width="0.7"/></svg>
<svg style="position:absolute;left:779.5px;top:28.5px;overflow:visible" width="6" height="6" viewBox="0 0 6 6"><path d="M0.5 2 L5.5 2 L3 5 Z" fill="#2e2e2e"/></svg>
<svg style="position:absolute;left:790.0px;top:22.0px;overflow:visible" width="16" height="16" viewBox="0 0 16 16"><rect x="0.5" y="1.5" width="14" height="13" fill="#fff" stroke="#333"/><rect x="1" y="2" width="13" height="2" fill="#555"/><path d="M1 8 H14" stroke="#3d8fd0" stroke-dasharray="2 1"/></svg>
<div style="position:absolute;left:812.5px;top:20.5px;width:1px;height:20.5px;background:#dedddb"></div>
<svg style="position:absolute;left:818.0px;top:22.0px;overflow:visible" width="16" height="16" viewBox="0 0 16 16"><path d="M1.5 6.5 H8.5 V14.5 H1.5 Z" fill="#fff" stroke="#333"/><path d="M9 1.5 L13.5 6 L9 10.5 L4.5 6 Z" fill="#fff" stroke="#333" transform="rotate(0)"/><circle cx="9.5" cy="5.5" r="4" fill="none" stroke="#333"/></svg>
<svg style="position:absolute;left:221.0px;top:49.0px;overflow:visible" width="16" height="16" viewBox="0 0 16 16"><text x="3.2" y="13" font-size="12.5" font-weight="bold" fill="#333" font-family="Liberation Sans">B</text></svg>
<svg style="position:absolute;left:243.0px;top:49.0px;overflow:visible" width="16" height="16" viewBox="0 0 16 16"><path d="M6 3 H10 M8 3 L7 13 M5 13 H9" stroke="#333" stroke-width="1"/></svg>
<svg style="position:absolute;left:264.0px;top:49.0px;overflow:visible" width="16" height="16" viewBox="0 0 16 16"><path d="M4 3 V9.5 A3.5 3.5 0 0 0 11 9.5 V3" stroke="#333" stroke-width="1.1" fill="none"/><path d="M3 15 H12" stroke="#3d8fd0" stroke-width="1.2"/></svg>
<svg style="position:absolute;left:284.0px;top:55.5px;overflow:visible" width="6" height="6" viewBox="0 0 6 6"><path d="M0.5 2 L5.5 2 L3 5 Z" fill="#2e2e2e"/></svg>
<div style="position:absolute;left:295px;top:47px;width:1px;height:20px;background:#dedddb"></div>
<svg style="position:absolute;left:298.0px;top:49.0px;overflow:visible" width="16" height="16" viewBox="0 0 16 16"><path d="M3 10.5 L7.5 1.5 L12 10.5 M4.8 7 H10.2" stroke="#333" stroke-width="1.1" fill="none"/><rect x="0" y="12" width="16" height="3" fill="#c9211e"/></svg>
<svg style="position:absolute;left:318.0px;top:55.5px;overflow:visible" width="6" height="6" viewBox="0 0 6 6"><path d="M0.5 2 L5.5 2 L3 5 Z" fill="#2e2e2e"/></svg>
<svg style="position:absolute;left:328.0px;top:49.0px;overflow:visible" width="16" height="16" viewBox="0 0 16 16"><path d="M4 3 L9 1 L12 8 L7 10 Z" fill="#fff" stroke="#555"/><path d="M2 5 L4.5 3.5 L6 9 Z" fill="#3d8fd0"/><rect x="0" y="12" width="16" height="3" fill="#f5f50a"/></svg>
<svg style="position:absolute;left:348.0px;top:55.5px;overflow:visible" width="6" height="6" viewBox="0 0 6 6"><path d="M0.5 2 L5.5 2 L3 5 Z" fill="#2e2e2e"/></svg>
<div style="position:absolute;left:359px;top:47px;width:1px;height:20px;background:#dedddb"></div>
<svg style="position:absolute;left:363.5px;top:49.0px;overflow:visible" width="16" height="16" viewBox="0 0 16 16"><path d="M1 2.5 H14" stroke="#606060" stroke-width="0.95"/><path d="M1 5.5 H10" stroke="#606060" stroke-width="0.95"/><path d="M1 8.5 H14" stroke="#606060" stroke-width="0.95"/><path d="M1 11.5 H10" stroke="#606060" stroke-width="0.95"/><path d="M1 14.5 H14" stroke="#606060" stroke-width="0.95"/></svg>
<svg style="position:absolute;left:385.0px;top:49.0px;overflow:visible" width="16" height="16" viewBox="0 0 16 16"><path d="M1 2.5 H14" stroke="#606060" stroke-width="0.95"/><path d="M3 5.5 H12" stroke="#606060" stroke-width="0.95"/><path d="M1 8.5 H14" stroke="#606060" stroke-width="0.95"/><path d="M3 11.5 H12" stroke="#606060" stroke-width="0.95"/><path d="M1 14.5 H14" stroke="#606060" stroke-width="0.95"/></svg>
<svg style="position:absolute;left:407.5px;top:49.0px;overflow:visible" width="16" height="16" viewBox="0 0 16 16"><path d="M1 2.5 H14" stroke="#606060" stroke-width="0.95"/><path d="M5 5.5 H14" stroke="#606060" stroke-width="0.95"/><path d="M1 8.5 H14" stroke="#606060" stroke-width="0.95"/><path d="M5 11.5 H14" stroke="#606060" stroke-width="0.95"/><path d="M1 14.5 H14" stroke="#606060" stroke-width="0.95"/></svg>
<div style="position:absolute;left:429.5px;top:47px;width:1px;height:20px;background:#dedddb"></div>
<svg style="position:absolute;left:434.5px;top:49.0px;overflow:visible" width="16" height="16" viewBox="0 0 16 16"><path d="M2 1.5 H13 M2 4.5 H13" stroke="#444"/><path d="M7.5 15 V7 M5 9.5 L7.5 7 L10 9.5" stroke="#3d8fd0" stroke-width="1.1" fill="none"/></svg>
<svg style="position:absolute;left:456.5px;top:49.0px;overflow:visible" width="16" height="16" viewBox="0 0 16 16"><path d="M1 8 H14" stroke="#444"/><path d="M7.5 1 V6.5 M5 4 L7.5 6.5 L10 4 M7.5 15 V9.5 M5 12 L7.5 9.5 L10 12" stroke="#3d8fd0" stroke-width="1.1" fill="none"/></svg>
<svg style="position:absolute;left:478.5px;top:49.0px;overflow:visible" width="16" height="16" viewBox="0 0 16 16"><path d="M2 11.5 H13 M2 14.5 H13" stroke="#444"/><path d="M7.5 1 V9 M5 6.5 L7.5 9 L10 6.5" stroke="#3d8fd0" stroke-width="1.1" fill="none"/></svg>
<div style="position:absolute;left:501px;top:47px;width:1px;height:20px;background:#dedddb"></div>
<svg style="position:absolute;left:506.0px;top:49.0px;overflow:visible" width="16" height="16" viewBox="0 0 16 16"><path d="M1 2.5 H14 M1 5.5 H10 M1 14.5 H8" stroke="#444"/><path d="M1 8.5 H11 A3 3 0 0 1 11 14.5 H10 M11.5 12.5 L10 14.5 L11.5 16" stroke="#3d8fd0" fill="none"/></svg>
<div style="position:absolute;left:526px;top:47px;width:1px;height:20px;background:#dedddb"></div>
<svg style="position:absolute;left:533.0px;top:49.0px;overflow:visible" width="16" height="16" viewBox="0 0 16 16"><rect x="0.5" y="1.5" width="14" height="12" fill="#fff" stroke="#3d8fd0"/><path d="M1 5 H14 M1 10 H14 M5 2 V13 M10 2 V13" stroke="#3d8fd0" stroke-width="0.8"/><path d="M3 7.5 H12" stroke="#3d8fd0" stroke-width="1.2"/><rect x="1" y="6" width="13" height="3" fill="#fff"/><path d="M3 7.5 H12 M3 7.5 L4.5 6 M3 7.5 L4.5 9 M12 7.5 L10.5 6 M12 7.5 L10.5 9" stroke="#3d8fd0" stroke-width="1" fill="none"/></svg>
<svg style="position:absolute;left:555.0px;top:49.0px;overflow:visible" width="16" height="16" viewBox="0 0 16 16"><rect x="0.5" y="1.5" width="14" height="12" fill="#e3e3e3" stroke="#c8c8c8"/><path d="M1 5 H14 M1 10 H14 M5 2 V13 M10 2 V13" stroke="#c8c8c8" stroke-width="0.8"/></svg>
<svg style="position:absolute;left:577.0px;top:49.0px;overflow:visible" width="16" height="16" viewBox="0 0 16 16"><rect x="0.5" y="1.5" width="14" height="12" fill="#fff" stroke="#d13b3b"/><path d="M1 5 H14 M1 10 H14 M5 2 V13 M10 2 V13" stroke="#d13b3b" stroke-width="0.8"/></svg>
<div style="position:absolute;left:599px;top:47px;width:1px;height:20px;background:#dedddb"></div>
<svg style="position:absolute;left:603.0px;top:49.0px;overflow:visible" width="16" height="16" viewBox="0 0 16 16"><rect x="0.5" y="2.5" width="15" height="10" fill="#fff" stroke="#555"/><circle cx="8" cy="9" r="2" fill="#555"/><rect x="10" y="8" width="2" height="5" fill="#555"/><rect x="13" y="6" width="2" height="7" fill="#555"/></svg>
<svg style="position:absolute;left:623.0px;top:55.5px;overflow:visible" width="6" height="6" viewBox="0 0 6 6"><path d="M0.5 2 L5.5 2 L3 5 Z" fill="#2e2e2e"/></svg>
<svg style="position:absolute;left:634.0px;top:49.0px;overflow:visible" width="16" height="16" viewBox="0 0 16 16"><text x="0.5" y="13.5" font-size="14" fill="#555" font-family="Liberation Sans">%</text></svg>
<svg style="position:absolute;left:654.0px;top:49.0px;overflow:visible" width="18" height="16" viewBox="0 0 18 16"><text x="0" y="14" font-size="14" fill="#666" font-family="Liberation Sans" letter-spacing="-2.2">0.0</text></svg>
<svg style="position:absolute;left:677.5px;top:49.0px;overflow:visible" width="16" height="16" viewBox="0 0 16 16"><rect x="0.5" y="2.5" width="13" height="12" fill="#fff" stroke="#555"/><path d="M0.5 4.5 H13.5" stroke="#555" stroke-width="1.4"/><path d="M3.5 1 V4 M10.5 1 V4" stroke="#555" stroke-width="1.2"/><rect x="3.5" y="6.5" width="7" height="6" fill="none" stroke="#888" stroke-width="0.6"/><text x="4.3" y="12.3" font-size="7" fill="#444" font-family="Liberation Sans">7</text></svg>
<div style="position:absolute;left:697.5px;top:47px;width:1px;height:20px;background:#dedddb"></div>
<svg style="position:absolute;left:703.0px;top:49.0px;overflow:visible" width="18" height="16" viewBox="0 0 18 16"><text x="-1" y="13" font-size="13" fill="#555" font-family="Liberation Sans" letter-spacing="-2">.00</text><path d="M12 10 V16 M9 13 H15" stroke="#3d8fd0" stroke-width="1.1"/></svg>
<svg style="position:absolute;left:725.0px;top:49.0px;overflow:visible" width="18" height="16" viewBox="0 0 18 16"><text x="-1" y="13" font-size="13" fill="#555" font-family="Liberation Sans" letter-spacing="-2">.00</text><path d="M10 10.5 L15 15.5 M15 10.5 L10 15.5" stroke="#e03a3a" stroke-width="1.1"/></svg>
<div style="position:absolute;left:749px;top:47px;width:1px;height:20px;background:#dedddb"></div>
<svg style="position:absolute;left:754.0px;top:49.0px;overflow:visible" width="16" height="16" viewBox="0 0 16 16"><path d="M6 2.5 H15 M9 5.5 H15 M9 8.5 H15 M9 11.5 H15 M6 14.5 H15" stroke="#444"/><path d="M0 8.5 H6 M4 6.5 L6 8.5 L4 10.5" stroke="#3d8fd0" fill="none"/></svg>
<svg style="position:absolute;left:775.5px;top:49.0px;overflow:visible" width="16" height="16" viewBox="0 0 16 16"><path d="M6 2.5 H15 M9 5.5 H15 M9 8.5 H15 M9 11.5 H15 M6 14.5 H15" stroke="#444"/><path d="M1 8.5 H7 M3 6.5 L1 8.5 L3 10.5" stroke="#3d8fd0" fill="none"/></svg>
<div style="position:absolute;left:797.5px;top:47px;width:1px;height:20px;background:#dedddb"></div>
<svg style="position:absolute;left:801.0px;top:49.0px;overflow:visible" width="16" height="16" viewBox="0 0 16 16"><rect x="0.5" y="1.5" width="13" height="13" fill="none" stroke="#333"/><path d="M7 1.5 V14.5 M0.5 8 H13.5" stroke="#333"/><path d="M0.5 14.5 H13.5" stroke="#f0a030"/></svg>
<svg style="position:absolute;left:821.5px;top:55.5px;overflow:visible" width="6" height="6" viewBox="0 0 6 6"><path d="M0.5 2 L5.5 2 L3 5 Z" fill="#2e2e2e"/></svg>
<svg style="position:absolute;left:831.0px;top:49.0px;overflow:visible" width="16" height="16" viewBox="0 0 16 16"><path d="M1 2 H14" stroke="#333" stroke-width="2"/><path d="M1 6 H14" stroke="#333" stroke-width="1.5"/><path d="M1 9.5 H14" stroke="#333" stroke-width="1"/><path d="M1 12.5 H14" stroke="#333" stroke-dasharray="1.5 1"/><path d="M1 14.5 H14" stroke="#333" stroke-dasharray="1 1"/></svg>
<svg style="position:absolute;left:851.0px;top:55.5px;overflow:visible" width="6" height="6" viewBox="0 0 6 6"><path d="M0.5 2 L5.5 2 L3 5 Z" fill="#2e2e2e"/></svg>
<svg style="position:absolute;left:860.0px;top:49.0px;overflow:visible" width="16" height="16" viewBox="0 0 16 16"><rect x="2.5" y="1.5" width="11" height="10" fill="#fff" stroke="#555"/><rect x="0" y="12" width="16" height="3.5" fill="#1f5fa8"/></svg>
<svg style="position:absolute;left:880.0px;top:55.5px;overflow:visible" width="6" height="6" viewBox="0 0 6 6"><path d="M0.5 2 L5.5 2 L3 5 Z" fill="#2e2e2e"/></svg>
<div style="position:absolute;left:890px;top:47px;width:1px;height:20px;background:#dedddb"></div>
<svg style="position:absolute;left:894.5px;top:49.0px;overflow:visible" width="16" height="16" viewBox="0 0 16 16"><rect x="0.5" y="1.5" width="12" height="11" fill="#fff" stroke="#555"/><rect x="1" y="2" width="11" height="3" fill="#5cb870"/><rect x="1" y="5" width="11" height="3" fill="#e76a6a"/><rect x="6.5" y="7.5" width="8" height="8" fill="#fff" stroke="#333"/><path d="M8 10 H13 M8 12.5 H13 M12 8.5 L9 14" stroke="#333" stroke-width="0.8"/></svg>
<svg style="position:absolute;left:914.5px;top:55.5px;overflow:visible" width="6" height="6" viewBox="0 0 6 6"><path d="M0.5 2 L5.5 2 L3 5 Z" fill="#2e2e2e"/></svg>
<div style="position:absolute;left:924px;top:47px;width:1px;height:20px;background:#dedddb"></div>
<svg style="position:absolute;left:930.0px;top:49.0px;overflow:visible" width="16" height="16" viewBox="0 0 16 16"><path d="M9 2 V15 M12 2 V15 M8 2 H13" stroke="#555" stroke-width="1"/><path d="M9 2 A3 3 0 0 0 9 8" fill="#555"/><path d="M1 12 H7 M5 10 L7 12 L5 14" stroke="#3d8fd0" fill="none"/></svg>
<svg style="position:absolute;left:953.0px;top:49.0px;overflow:visible" width="16" height="16" viewBox="0 0 16 16"><path d="M5 2 V15 M8 2 V10 M4 2 H9" stroke="#555" stroke-width="1"/><path d="M5 2 A3 3 0 0 0 5 8" fill="#555"/><path d="M15 12 H9 M11 10 L9 12 L11 14" stroke="#3d8fd0" fill="none"/></svg>
<div style="position:absolute;left:973px;top:47px;width:1px;height:20px;background:#dedddb"></div>
<svg style="position:absolute;left:979.5px;top:49.0px;overflow:visible" width="16" height="16" viewBox="0 0 16 16"><text x="0" y="9" font-size="10" fill="#3d8fd0" font-family="Liberation Sans">A</text><path d="M9 3 H15 M13 1 L15 3 L13 5 M9 7 H15 M13 5 L15 7 L13 9 M1 13 H15 M13 11 L15 13 L13 15" stroke="#444" stroke-width="0.9" fill="none"/></svg>
<svg style="position:absolute;left:1002.0px;top:49.0px;overflow:visible" width="16" height="16" viewBox="0 0 16 16"><text x="6" y="9" font-size="10" fill="#3d8fd0" font-family="Liberation Sans">A</text><path d="M2 2 V14 M0 12 L2 14 L4 12 M6 10 V14 M4 12 L6 14 L8 12 M11 10 V14 M9 12 L11 14 L13 12 M5 2 V7" stroke="#444" stroke-width="0.9" fill="none"/></svg>
<svg style="position:absolute;left:123.0px;top:52.0px;overflow:visible" width="10" height="10" viewBox="0 0 10 10"><path d="M1 3 H9 L5 7.5 Z" fill="#333"/></svg>
<svg style="position:absolute;left:195.75px;top:52.0px;overflow:visible" width="10" height="10" viewBox="0 0 10 10"><path d="M1 3 H9 L5 7.5 Z" fill="#333"/></svg>
<svg style="position:absolute;left:93.0px;top:79.0px;overflow:visible" width="10" height="10" viewBox="0 0 10 10"><path d="M1 3 H9 L5 7.5 Z" fill="#333"/></svg>
<svg style="position:absolute;left:118.0px;top:76.0px;overflow:visible" width="16" height="16" viewBox="0 0 16 16"><text x="0" y="12" font-size="13.5" font-style="italic" fill="#3d8fd0" font-family="Liberation Serif">f</text><text x="5" y="14" font-size="11" font-style="italic" fill="#3d8fd0" font-family="Liberation Serif">x</text></svg>
<svg style="position:absolute;left:132.0px;top:76.0px;overflow:visible" width="16" height="16" viewBox="0 0 16 16"><path d="M12 2 H2 L7 8 L2 14 H12" stroke="#333" stroke-width="0.9" fill="none"/></svg>
<svg style="position:absolute;left:149.0px;top:82.5px;overflow:visible" width="6" height="6" viewBox="0 0 6 6"><path d="M0.5 2 L5.5 2 L3 5 Z" fill="#2e2e2e"/></svg>
<svg style="position:absolute;left:159.5px;top:76.0px;overflow:visible" width="10" height="16" viewBox="0 0 10 16"><path d="M1 5.5 H9 M1 10 H9" stroke="#333" stroke-width="1.6"/></svg>
<svg style="position:absolute;left:1147.5px;top:79.0px;overflow:visible" width="10" height="10" viewBox="0 0 10 10"><path d="M1 3 H9 L5 7.5 Z" fill="#333"/></svg>
<svg style="position:absolute;left:1175.5px;top:79.5px;overflow:visible" width="11" height="10" viewBox="0 0 11 10"><path d="M1 1.5 H10 M1 5 H10 M1 8.5 H10" stroke="#333" stroke-width="1.3"/></svg>
<svg style="position:absolute;left:1174.5px;top:108.0px;overflow:visible" width="14" height="14" viewBox="0 0 14 14"><rect x="0.5" y="0.5" width="13" height="13" fill="#fff" stroke="#333"/><path d="M0.5 2.5 H13.5" stroke="#333" stroke-width="1.5"/><path d="M3 6.5 H11 M3 9.5 H11" stroke="#3d8fd0"/><path d="M8 5 V8 M6 8 V11" stroke="#3d8fd0"/></svg>
<svg style="position:absolute;left:1174.0px;top:138.0px;overflow:visible" width="16" height="14" viewBox="0 0 16 14"><path d="M0.5 11 L5 0.5 H6 L10.5 11 M2.5 7 H8.5" stroke="#333" stroke-width="1.1" fill="none"/><path d="M15 1.5 L9.5 8" stroke="#333" stroke-width="1"/><path d="M9.8 7.5 C7 8 7.5 12 6 13.5 C9 13.5 11.5 11.5 10.8 8.5 Z" fill="#3d8fd0"/></svg>
<svg style="position:absolute;left:1174.0px;top:164.5px;overflow:visible" width="16" height="16" viewBox="0 0 16 16"><path d="M0.5 2.5 H6 L7.5 4 H14.5 V13.5 H0.5 Z" fill="#f7cf73" stroke="#eea552"/><rect x="6.5" y="6.5" width="8" height="8" fill="#fff" stroke="#555"/><path d="M7 14 L9.5 10 L11 12 L12.5 10.5 L14 14 Z" fill="#3d8fd0"/></svg>
<svg style="position:absolute;left:1174.5px;top:194.5px;overflow:visible" width="14" height="14" viewBox="0 0 14 14"><circle cx="7" cy="7" r="6.2" fill="#fff" stroke="#444"/><path d="M10 4 L6 6 L4 10 L8 8 Z" fill="#3d8fd0"/></svg>
<svg style="position:absolute;left:1174.0px;top:223.0px;overflow:visible" width="16" height="16" viewBox="0 0 16 16"><text x="0" y="12" font-size="13" font-style="italic" fill="#3d8fd0" font-family="Liberation Serif">f</text><text x="5.5" y="14" font-size="10.5" font-style="italic" fill="#3d8fd0" font-family="Liberation Serif">x</text></svg>
<div style="position:absolute;left:1162px;top:361px;width:0;height:0;border-top:3px solid transparent;border-bottom:3px solid transparent;border-left:3px solid #fff"></div>
<svg style="position:absolute;left:6.0px;top:642.5px;overflow:visible" width="60" height="14" viewBox="0 0 60 14"><g fill="none" stroke="#d2d2d2" stroke-width="1.1"><path d="M1 1 V13"/><path d="M10 2 L5 7 L10 12"/><circle cx="11" cy="7" r="1"/><path d="M15 3 V11"/><path d="M21 3 L16.5 7 L21 11 Z"/><path d="M27 3 L22.5 7 L27 11 Z"/><path d="M32 3 L36.5 7 L32 11 Z"/><path d="M38 3 L42.5 7 L38 11 Z"/><path d="M44 3 V11"/><circle cx="48" cy="7" r="1"/><path d="M50 2 L55 7 L50 12"/><path d="M59 1 V13"/></g></svg>
<div style="position:absolute;left:75px;top:644px;width:9px;height:13px;background:#fff;border:1px solid #d8d8d8;border-top:none;border-radius:0 0 1px 1px"></div>
<svg style="position:absolute;left:81.5px;top:646.5px;overflow:visible" width="6" height="6" viewBox="0 0 6 6"><circle cx="3" cy="3" r="2.5" fill="#3d8fd0"/><path d="M1.5 3 H4.5 M3 1.5 V4.5" stroke="#fff" stroke-width="0.8"/></svg>
<svg style="position:absolute;left:6.0px;top:661.0px;overflow:visible" width="11" height="11" viewBox="0 0 11 11"><rect x="0.5" y="0.5" width="10" height="10" rx="1" fill="none" stroke="#999"/><path d="M2.5 0.5 V4 H8.5 V0.5 M2.5 10.5 V6.5 H8.5 V10.5" stroke="#999" fill="none"/></svg>
<svg style="position:absolute;left:827.5px;top:661.5px;overflow:visible" width="17" height="11" viewBox="0 0 17 11"><rect x="0.5" y="2.5" width="10" height="6" fill="#fff" stroke="#3d8fd0"/><path d="M14 1 V10 M12.5 1 H15.5 M12.5 10 H15.5" stroke="#333"/></svg>
<div style="position:absolute;left:1077px;top:666.5px;width:6px;height:1px;background:#333"></div>
<div style="position:absolute;left:1088px;top:666.5px;width:64px;height:1px;background:#888"></div>
<div style="position:absolute;left:1118px;top:663px;width:3px;height:8px;background:#fff;border:1px solid #666;border-radius:1px"></div>
<div style="position:absolute;left:1156.5px;top:666.5px;width:7px;height:1px;background:#333"></div>
<div style="position:absolute;left:1159.5px;top:663.5px;width:1px;height:7px;background:#333"></div>
<div style="position:absolute;left:1149px;top:634px;width:1px;height:6px;background:#555"></div>
</body></html>
